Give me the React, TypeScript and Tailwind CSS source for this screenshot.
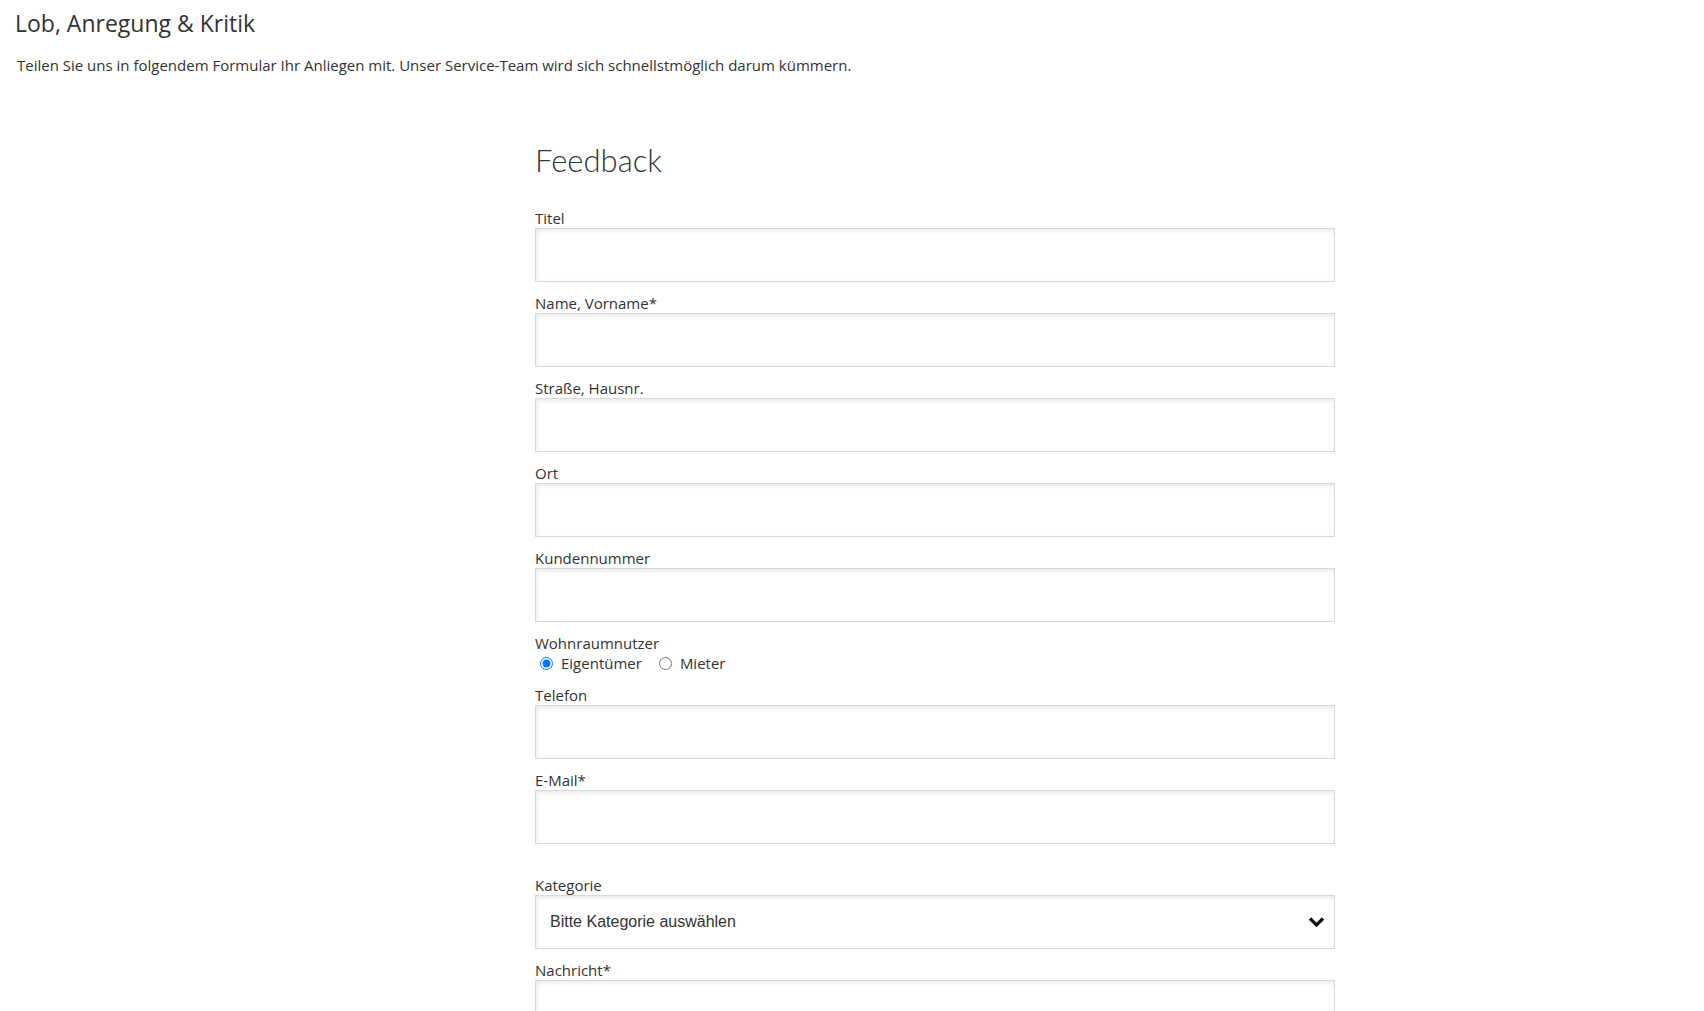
import React from "react";

const font = { fontFamily: '"Open Sans", "Noto Sans", sans-serif' };

function Label({ children }: { children: React.ReactNode }) {
  return <div className="text-[15px] leading-[20px] text-[#333]">{children}</div>;
}

function Field({ label, extra = "" }: { label: string; extra?: string }) {
  return (
    <div className={"mb-[11px] " + extra}>
      <Label>{label}</Label>
      <input
        type="text"
        className="block w-full h-[54px] border border-[#d9d9d9] bg-white shadow-[inset_1px_2px_4px_rgba(0,0,0,0.09)] outline-none"
      />
    </div>
  );
}

export default function App() {
  return (
    <div className="min-h-screen bg-white text-[#333]" style={font}>
      <div className="pl-[15px] pt-[5px]">
        <h1 className="text-[23px] leading-[36px] font-normal text-[#333]">Lob, Anregung &amp; Kritik</h1>
        <p className="mt-[14px] pl-[2px] text-[15px] leading-[20px] text-[#333]">
          Teilen Sie uns in folgendem Formular Ihr Anliegen mit. Unser Service-Team wird sich schnellstmöglich darum kümmern.
        </p>
      </div>
      <div className="ml-[535px] w-[800px] mt-[63px]">
        <h2
          className="text-[31px] leading-[44px] font-light text-[#333] mb-[26px]"
          style={{ fontFamily: 'Lato, "Open Sans", sans-serif' }}
        >
          Feedback
        </h2>
        <Field label="Titel" />
        <Field label="Name, Vorname*" />
        <Field label="Straße, Hausnr." />
        <Field label="Ort" />
        <Field label="Kundennummer" />
        <div className="mb-[11px]">
          <Label>Wohnraumnutzer</Label>
          <div className="flex items-center h-[21px] text-[15px] text-[#333]">
            <label className="flex items-center">
              <input type="radio" name="w" defaultChecked className="m-0 ml-[5px] w-[13px] h-[13px] accent-[#0075ff]" />
              <span className="ml-[8px]">Eigentümer</span>
            </label>
            <label className="flex items-center ml-[17px]">
              <input type="radio" name="w" className="m-0 w-[13px] h-[13px]" />
              <span className="ml-[8px]">Mieter</span>
            </label>
          </div>
        </div>
        <Field label="Telefon" />
        <Field label="E-Mail*" extra="mb-[31px]" />
        <div className="mb-[11px]">
          <Label>Kategorie</Label>
          <div className="relative">
            <select
              className="block w-full h-[54px] appearance-none border border-[#d9d9d9] bg-white pl-[14px] text-[16px] text-[#333] shadow-[inset_1px_2px_4px_rgba(0,0,0,0.09)] outline-none"
              style={{ fontFamily: '"Liberation Sans", Arial, sans-serif' }}
              defaultValue=""
            >
              <option value="">Bitte Kategorie auswählen</option>
            </select>
            <svg
              className="pointer-events-none absolute right-[10px] top-[21px]"
              width="17"
              height="12"
              viewBox="0 0 17 12"
            >
              <path d="M2 2.5 L8.5 9 L15 2.5" fill="none" stroke="#111" strokeWidth="3.2" />
            </svg>
          </div>
        </div>
        <div>
          <Label>Nachricht*</Label>
          <textarea className="block w-full h-[150px] border border-[#d9d9d9] bg-white shadow-[inset_1px_2px_4px_rgba(0,0,0,0.09)] outline-none resize-none" />
        </div>
      </div>
    </div>
  );
}
